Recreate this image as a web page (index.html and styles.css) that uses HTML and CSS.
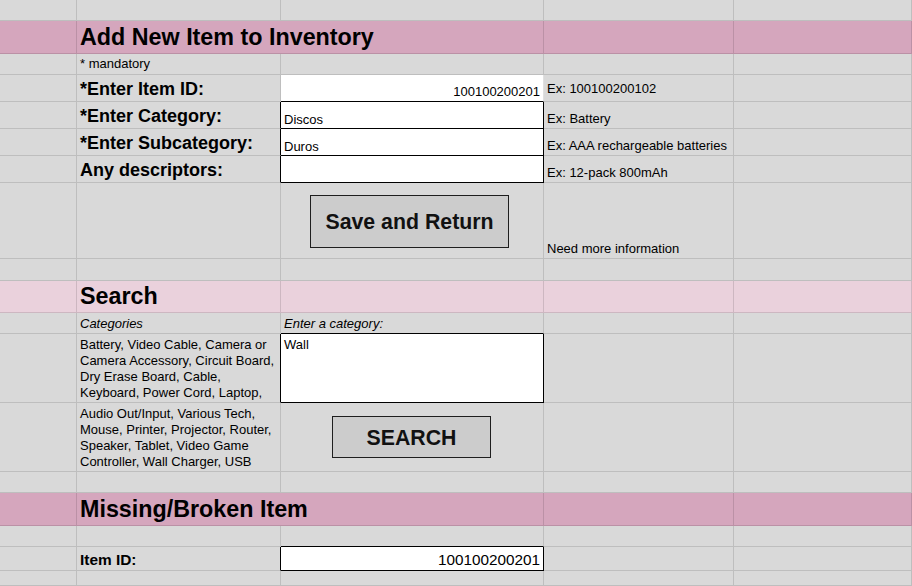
FILE: index.html
```html
<!DOCTYPE html>
<html lang="en">
<head>
<meta charset="utf-8">
<title>Inventory</title>
<link rel="stylesheet" href="styles.css">
</head>
<body>
<div class="sheet">
  <div class="row h21"><div class="c"></div><div class="c"></div><div class="c"></div><div class="c"></div><div class="c"></div></div>

  <div class="row h33 pink"><div class="c"></div><div class="c head span2">Add New Item to Inventory</div><div class="c"></div><div class="c"></div></div>

  <div class="row h21"><div class="c"></div><div class="c note">* mandatory</div><div class="c"></div><div class="c"></div><div class="c"></div></div>

  <div class="row h27"><div class="c"></div><div class="c label">*Enter Item ID:</div><div class="c white val-r kb">100100200201</div><div class="c hint hint-up">Ex: 100100200102</div><div class="c"></div></div>

  <div class="row h27"><div class="c"></div><div class="c label kr">*Enter Category:</div><div class="c white field kr kb">Discos</div><div class="c hint">Ex: Battery</div><div class="c"></div></div>

  <div class="row h27"><div class="c"></div><div class="c label kr">*Enter Subcategory:</div><div class="c white field kr kb">Duros</div><div class="c hint">Ex: AAA rechargeable batteries</div><div class="c"></div></div>

  <div class="row h27"><div class="c"></div><div class="c label kr">Any descriptors:</div><div class="c white field kr kb"></div><div class="c hint">Ex: 12-pack 800mAh</div><div class="c"></div></div>

  <div class="row h76"><div class="c"></div><div class="c"></div><div class="c slot slot-save"><div class="btn btn-save">Save and Return</div></div><div class="c hint">Need more information</div><div class="c"></div></div>

  <div class="row h22"><div class="c"></div><div class="c"></div><div class="c"></div><div class="c"></div><div class="c"></div></div>

  <div class="row h32 pink-light"><div class="c"></div><div class="c head">Search</div><div class="c"></div><div class="c"></div><div class="c"></div></div>

  <div class="row h21"><div class="c"></div><div class="c it">Categories</div><div class="c it kb">Enter a category:</div><div class="c"></div><div class="c"></div></div>

  <div class="row h69"><div class="c"></div><div class="c list kr">Battery, Video Cable, Camera or<br>Camera Accessory, Circuit Board,<br>Dry Erase Board, Cable,<br>Keyboard, Power Cord, Laptop,</div><div class="c white top kr kb">Wall</div><div class="c"></div><div class="c"></div></div>

  <div class="row h69"><div class="c"></div><div class="c list">Audio Out/Input, Various Tech,<br>Mouse, Printer, Projector, Router,<br>Speaker, Tablet, Video Game<br>Controller, Wall Charger, USB</div><div class="c slot slot-search"><div class="btn btn-search">SEARCH</div></div><div class="c"></div><div class="c"></div></div>

  <div class="row h21"><div class="c"></div><div class="c"></div><div class="c"></div><div class="c"></div><div class="c"></div></div>

  <div class="row h33 pink"><div class="c"></div><div class="c head span2">Missing/Broken Item</div><div class="c"></div><div class="c"></div></div>

  <div class="row h21"><div class="c"></div><div class="c"></div><div class="c kb"></div><div class="c"></div><div class="c"></div></div>

  <div class="row h24"><div class="c"></div><div class="c label-sm kr">Item ID:</div><div class="c white val-r val-lg kr kb">100100200201</div><div class="c"></div><div class="c"></div></div>

  <div class="row h15"><div class="c"></div><div class="c"></div><div class="c"></div><div class="c"></div><div class="c"></div></div>
</div>
</body>
</html>
```
FILE: styles.css
```css
* { box-sizing: border-box; }
html, body {
  margin: 0;
  padding: 0;
  background: #d9d9d9;
  font-family: "Liberation Sans", Arial, sans-serif;
  color: #000;
}
.sheet {
  width: 912px;
  height: 586px;
  overflow: hidden;
}
.row {
  display: grid;
  grid-template-columns: 77px 204px 263px 190px 1fr;
  background: #d9d9d9;
}
.pink { background: #d5a6bd; }
.pink-light { background: #ead1dc; }

.h15 { height: 15px; }
.h21 { height: 21px; }
.h22 { height: 22px; }
.h24 { height: 24px; }
.h27 { height: 27px; }
.h32 { height: 32px; }
.h33 { height: 33px; }
.h69 { height: 69px; }
.h76 { height: 76px; }

.c {
  display: flex;
  align-items: flex-end;
  min-width: 0;
  padding: 0 3px 2px 3px;
  border-right: 1px solid rgba(0, 0, 0, 0.12);
  border-bottom: 1px solid rgba(0, 0, 0, 0.12);
  font-size: 13px;
  line-height: 1.15;
  white-space: nowrap;
  overflow: hidden;
}
.span2 { grid-column: span 2; }
.white { background: #fff; }
.kr { border-right-color: #000; }
.kb { border-bottom-color: #000; }

.head {
  font-size: 23.3px;
  font-weight: bold;
  padding-bottom: 2px;
}
.note { font-size: 13px; padding-bottom: 2px; }
.label {
  font-size: 18px;
  font-weight: bold;
  padding-bottom: 1px;
}
.label-sm {
  font-size: 15.4px;
  font-weight: bold;
  padding-bottom: 1px;
}
.hint { padding-bottom: 1px; }
.hint-up { padding-bottom: 4px; }
.field { padding-bottom: 0; }
.val-r { justify-content: flex-end; padding-right: 3px; padding-bottom: 1px; }
.val-lg { font-size: 15.3px; }
.it { font-style: italic; padding-bottom: 1px; }
.top { align-items: flex-start; padding-top: 4px; }
.list {
  line-height: 16px;
  padding-bottom: 1px;
}

.slot { align-items: flex-start; }
.slot-save { padding: 12px 0 0 29px; }
.slot-search { padding: 13px 0 0 51px; }

.btn {
  display: flex;
  align-items: center;
  justify-content: center;
  background: #cccccc;
  border: 1px solid #1e1e1e;
  font-size: 21.3px;
  font-weight: bold;
  color: #111;
  padding-top: 2px;
}
.btn-save { width: 199px; height: 53px; }
.btn-search { width: 159px; height: 42px; padding-top: 3px; }
```
